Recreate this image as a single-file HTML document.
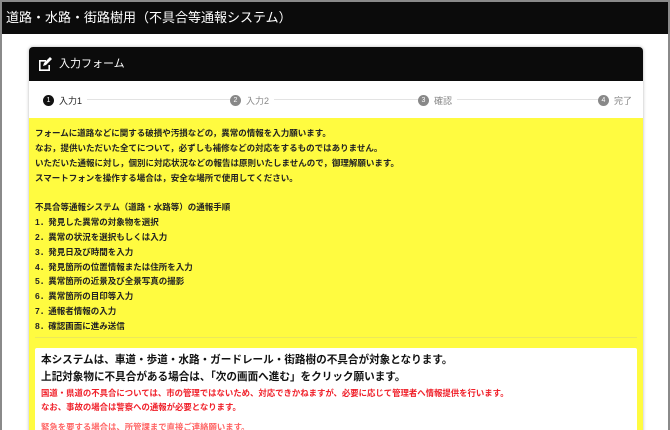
<!DOCTYPE html>
<html><head><meta charset="utf-8"><style>
*{margin:0;padding:0;box-sizing:border-box}
body{width:670px;height:430px;overflow:hidden;background:#8a8a8a;font-family:"Liberation Sans","Noto Sans CJK JP",sans-serif;position:relative}
.page{position:absolute;left:2px;top:2px;width:666px;height:428px;background:#fff;overflow:hidden}
.top{height:32px;background:#0b0b0b;color:#fff;font-size:13px;line-height:31px;padding-left:4px}
.card{position:absolute;left:27px;top:45px;width:614px;height:400px;box-shadow:0 0 3px rgba(0,0,0,.3);border-radius:4px 4px 0 0;overflow:hidden}
.ch{height:34px;background:#0b0b0b;color:#fff;font-size:11px;line-height:34px;padding-left:30px;position:relative}
.steps{height:37px;background:#fff;position:relative;font-size:9px;color:#888}
.st{position:absolute;top:13px;display:flex;align-items:center;background:#fff;padding-right:5px}
.c{width:11px;height:11px;border-radius:50%;background:#888;color:#fff;font-size:7px;text-align:center;line-height:11px;margin-right:5px}
.line{position:absolute;top:18px;left:20px;right:25px;height:1px;background:#e3e3e3}
.y{background:#fffb40;height:330px;padding:8px 6px 0 6px;font-size:8.5px;color:#222;line-height:14.85px;font-weight:bold}
.sep{border-top:1px solid #ece85a;margin-top:3px}
.box{background:#fff;margin-top:10px;padding:4px 6px;border-radius:2px}
.b1{font-size:10.6px;font-weight:bold;color:#111;line-height:17px}
.r{color:#f0202a;font-size:8.4px;line-height:14px}
</style></head><body><div class="page">
<div class="top">道路・水路・街路樹用（不具合等通報システム）</div>
<div class="card">
<div class="ch"><svg style="position:absolute;left:9px;top:10px" width="14" height="14" viewBox="0 0 14 14"><path d="M1 3h7v1.6H2.6v7.8h7.8V8H12v6H1z" fill="#fff"/><path d="M5 9l1-3 6-6 2 2-6 6z" fill="#fff"/></svg>入力フォーム</div>
<div class="steps"><div class="line"></div>
<div class="st" style="left:14px;color:#222"><div class="c" style="background:#111">1</div>入力1</div>
<div class="st" style="left:201px"><div class="c">2</div>入力2</div>
<div class="st" style="left:389px"><div class="c">3</div>確認</div>
<div class="st" style="left:569px"><div class="c">4</div>完了</div>
</div>
<div class="y">
フォームに道路などに関する破損や汚損などの，異常の情報を入力願います。<br>
なお，提供いただいた全てについて，必ずしも補修などの対応をするものではありません。<br>
いただいた通報に対し，個別に対応状況などの報告は原則いたしませんので，御理解願います。<br>
スマートフォンを操作する場合は，安全な場所で使用してください。<br><br>
不具合等通報システム（道路・水路等）の通報手順<br>
1．発見した異常の対象物を選択<br>
2．異常の状況を選択もしくは入力<br>
3．発見日及び時間を入力<br>
4．発見箇所の位置情報または住所を入力<br>
5．異常箇所の近景及び全景写真の撮影<br>
6．異常箇所の目印等入力<br>
7．通報者情報の入力<br>
8．確認画面に進み送信
<div class="sep"></div>
<div class="box">
<div class="b1">本システムは、車道・歩道・水路・ガードレール・街路樹の不具合が対象となります。</div>
<div class="b1">上記対象物に不具合がある場合は、「次の画面へ進む」をクリック願います。</div>
<div class="r">国道・県道の不具合については、市の管理ではないため、対応できかねますが、必要に応じて管理者へ情報提供を行います。</div>
<div class="r">なお、事故の場合は警察への通報が必要となります。</div>
<div class="r" style="margin-top:6px;color:#f66">緊急を要する場合は、所管課まで直接ご連絡願います。</div>
</div>
</div>
</div>
</div></body></html>
